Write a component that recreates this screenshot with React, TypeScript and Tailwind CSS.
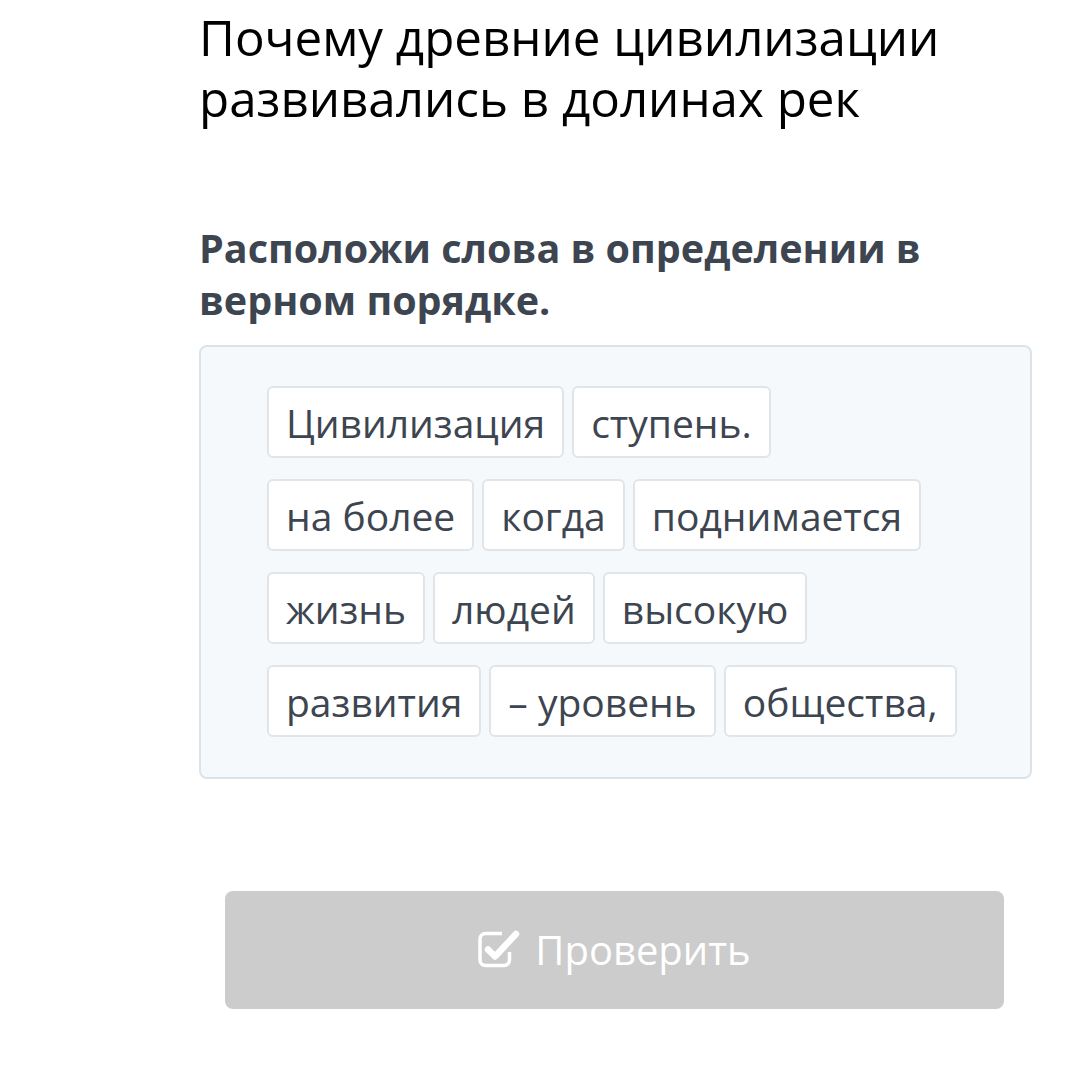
const rows = [
  ["Цивилизация", "ступень."],
  ["на более", "когда", "поднимается"],
  ["жизнь", "людей", "высокую"],
  ["развития", "– уровень", "общества,"],
];

function CheckSquareIcon() {
  return (
    <svg width="42" height="40" viewBox="0 0 42 40" fill="none" stroke="currentColor">
      <path
        d="M24 3.5H7.5A5.5 5.5 0 0 0 2 9V30A5.5 5.5 0 0 0 7.5 35.5H26A5.5 5.5 0 0 0 31.5 30V22"
        strokeWidth="3.5"
      />
      <path d="M10 19.5L17 26.5L38 4" strokeWidth="6.5" strokeLinecap="round" strokeLinejoin="round" />
    </svg>
  );
}

function Chip({ text }: { text: string }) {
  return (
    <div className="h-[72px] px-[17px] flex items-center bg-white border-2 border-[#e1e5e8] rounded-[6px] text-[39px] text-[#3d4550] leading-none">
      {text}
    </div>
  );
}

export default function App() {
  return (
    <div
      className="w-[1080px] h-[1072px] bg-white overflow-hidden"
      style={{ fontFamily: '"Open Sans", sans-serif' }}
    >
      <div className="ml-[199px] w-[833px]">
        {/* Question title */}
        <h1 className="pt-[6px] text-[49.3px] leading-[61px] text-black font-normal">
          Почему древние цивилизации развивались в долинах рек
        </h1>

        {/* Task */}
        <p className="mt-[94px] text-[39.5px] leading-[52px] font-bold text-[#3d4550]">
          Расположи слова в определении в верном порядке.
        </p>

        {/* Word bank */}
        <div className="mt-[19px] border-2 border-[#dce3e8] rounded-[8px] bg-[#f5f9fc] pl-[66px] pr-6 pt-[39px] pb-[40px] flex flex-col gap-[21px]">
          {rows.map((row, i) => (
            <div key={i} className="flex gap-[8px]">
              {row.map((w) => (
                <Chip key={w} text={w} />
              ))}
            </div>
          ))}
        </div>

        {/* Check button */}
        <div className="pl-[26px] pr-[28px] mt-[112px]">
          <button className="w-full h-[118px] rounded-[8px] bg-[#cccccc] text-white text-[40px] flex items-center justify-center gap-[15px]">
            <CheckSquareIcon />
            <span>Проверить</span>
          </button>
        </div>
      </div>
    </div>
  );
}
